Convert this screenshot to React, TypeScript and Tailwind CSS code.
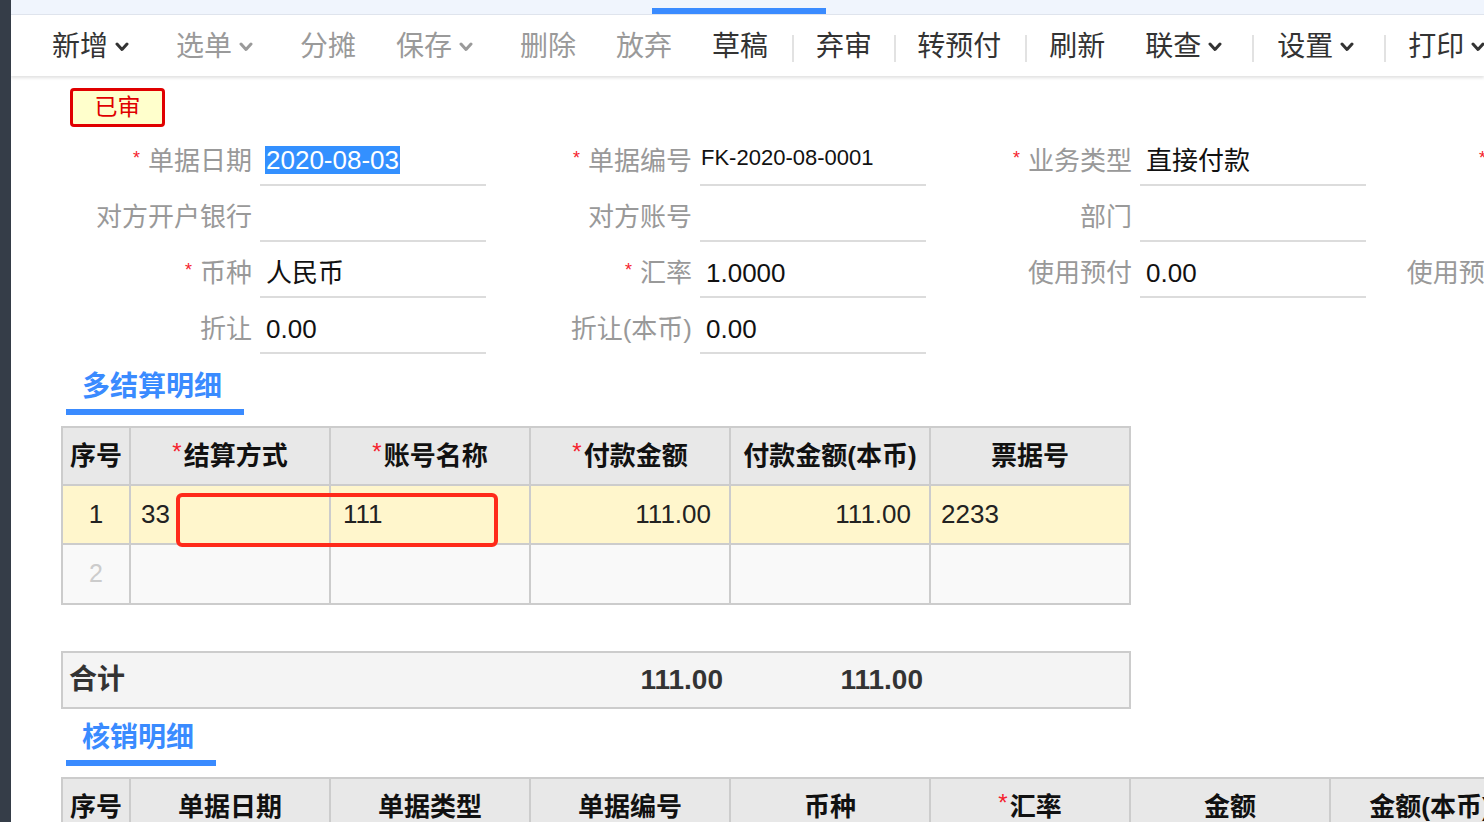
import React from "react";

const FONT = { fontFamily: '"Liberation Sans", "Noto Sans CJK SC", sans-serif' };

type ToolItem = { label: string; ml: number; gray?: boolean; caret?: boolean; sep?: boolean };

const toolItems: ToolItem[] = [
  { label: "新增", ml: 41, caret: true },
  { label: "选单", ml: 47, gray: true, caret: true },
  { label: "分摊", ml: 47, gray: true },
  { label: "保存", ml: 40, gray: true, caret: true },
  { label: "删除", ml: 47, gray: true },
  { label: "放弃", ml: 40, gray: true },
  { label: "草稿", ml: 40 },
  { label: "", ml: 24, sep: true },
  { label: "弃审", ml: 22 },
  { label: "", ml: 22, sep: true },
  { label: "转预付", ml: 21 },
  { label: "", ml: 24, sep: true },
  { label: "刷新", ml: 22 },
  { label: "联查", ml: 40, caret: true },
  { label: "", ml: 30, sep: true },
  { label: "设置", ml: 23, caret: true },
  { label: "", ml: 30, sep: true },
  { label: "打印", ml: 22, caret: true },
];

const Caret = ({ color }: { color: string }) => (
  <svg width="14" height="10" viewBox="0 0 14 10" className="ml-[7px] shrink-0">
    <polyline points="2,2 7,7.5 12,2" fill="none" stroke={color} strokeWidth="3" strokeLinecap="round" strokeLinejoin="round" />
  </svg>
);

const Star = () => <span className="text-[#f5222d] text-[18px] mr-[8px] relative -top-[3px]">*</span>;

type Field = { label: string; value?: string; req?: boolean; kind?: "date" | "small"; pr?: string };

const formRows: Field[][] = [
  [
    { label: "单据日期", value: "2020-08-03", req: true, kind: "date" },
    { label: "单据编号", value: "FK-2020-08-0001", req: true, kind: "small" },
    { label: "业务类型", value: "直接付款", req: true },
    { label: "供应商", req: true },
  ],
  [
    { label: "对方开户银行" },
    { label: "对方账号" },
    { label: "部门" },
    { label: "" },
  ],
  [
    { label: "币种", value: "人民币", req: true },
    { label: "汇率", value: "1.0000", req: true },
    { label: "使用预付", value: "0.00" },
    { label: "使用预付(本币)", pr: "pr-[0px]" },
  ],
  [{ label: "折让", value: "0.00" }, { label: "折让(本币)", value: "0.00" }],
];

const FieldCell = ({ f }: { f: Field }) => (
  <div className="flex shrink-0 w-[440px] h-[56px]">
    <div
      className={`w-[214px] shrink-0 ${f.pr ?? "pr-[8px]"} pt-[6px] flex items-center justify-end text-[26px] text-[#999] whitespace-nowrap`}
    >
      {f.req && <Star />}
      {f.label}
    </div>
    {f.label !== "" || f.value ? (
      <div className="w-[226px] shrink-0 border-b-2 border-[#dcdcdc] pt-[6px] flex items-center">
        {f.kind === "date" ? (
          <span className="ml-[5px] bg-[#3390ff] text-white text-[26px] leading-[28px] px-[1px]">{f.value}</span>
        ) : f.kind === "small" ? (
          <span className="ml-[1px] -mt-[6px] text-[22px] text-[#111]">{f.value}</span>
        ) : (
          <span className="ml-[6px] mt-[2px] text-[26px] text-[#111]">{f.value}</span>
        )}
      </div>
    ) : null}
  </div>
);

const HeadCell = ({ w, text, req }: { w: string; text: string; req?: boolean }) => (
  <div className={`${w} shrink-0 border-r-2 border-b-2 border-[#ccc] flex items-center justify-center font-bold text-[26px] text-[#111]`}>
    {req && <span className="text-[#f5222d] text-[24px] font-normal mr-[2px] relative -top-[4px]">*</span>}
    {text}
  </div>
);

const SectionTitle = ({ text, w, mt }: { text: string; w: string; mt: string }) => (
  <div className={`${mt} ml-[55px] ${w} pl-[16px] pb-[4px] border-b-[6px] border-[#3a8bff] text-[28px] leading-[36px] font-bold text-[#3a8bff]`}>
    {text}
  </div>
);

const cell = "shrink-0 border-r-2 border-b-2 border-[#ccc] flex items-center";

export default function App() {
  return (
    <div className="flex h-screen w-full overflow-hidden bg-white" style={FONT}>
      <div className="w-[11px] shrink-0 bg-[#353d48]" />
      <div className="flex-1 min-w-0 overflow-hidden">
        <div className="h-[15px] bg-[#f0f5fd] border-b border-[#e0e5ee] relative">
          <div className="absolute left-[641px] top-[8px] w-[174px] h-[6px] bg-[#3a8bff]" />
        </div>
        <div className="h-[61px] pt-[3px] flex items-center shadow-[0_2px_3px_rgba(0,0,0,0.12)] whitespace-nowrap relative">
          {toolItems.map((t, i) =>
            t.sep ? (
              <div key={i} className="w-[2px] h-[27px] bg-[#e2e2e2] shrink-0 mt-[2px]" style={{ marginLeft: t.ml }} />
            ) : (
              <div
                key={i}
                className={`flex items-center shrink-0 text-[28px] leading-[36px] ${t.gray ? "text-[#9a9a9a]" : "text-[#333]"}`}
                style={{ marginLeft: t.ml }}
              >
                {t.label}
                {t.caret && <Caret color={t.gray ? "#9a9a9a" : "#333"} />}
              </div>
            )
          )}
        </div>

        <div className="mt-[12px] ml-[59px] w-[95px] h-[39px] border-[3px] border-[#e00000] rounded-[4px] bg-[#ffffcc] flex items-center justify-center text-[23px] text-[#e00000]">
          已审
        </div>

        <div className="mt-[3px] ml-[35px]">
          {formRows.map((row, r) => (
            <div key={r} className="flex">
              {row.map((f, c) => (
                <FieldCell key={c} f={f} />
              ))}
            </div>
          ))}
        </div>

        <SectionTitle text="多结算明细" w="w-[178px]" mt="mt-[15px]" />

        <div className="relative mt-[11px] ml-[50px] w-[1070px] border-l-2 border-t-2 border-[#ccc]">
          <div className="flex h-[58px] bg-[#e8e8e8]">
            <HeadCell w="w-[68px]" text="序号" />
            <HeadCell w="w-[200px]" text="结算方式" req />
            <HeadCell w="w-[200px]" text="账号名称" req />
            <HeadCell w="w-[200px]" text="付款金额" req />
            <HeadCell w="w-[200px]" text="付款金额(本币)" />
            <HeadCell w="w-[200px]" text="票据号" />
          </div>
          <div className="flex h-[59px] bg-[#fff6cc] text-[26px] text-[#222]">
            <div className={`w-[68px] ${cell} justify-center`}>1</div>
            <div className={`w-[200px] ${cell} pl-[10px]`}>33</div>
            <div className={`w-[200px] ${cell} pl-[12px]`}>111</div>
            <div className={`w-[200px] ${cell} justify-end pr-[18px]`}>111.00</div>
            <div className={`w-[200px] ${cell} justify-end pr-[18px]`}>111.00</div>
            <div className={`w-[200px] ${cell} pl-[10px]`}>2233</div>
          </div>
          <div className="flex h-[60px] bg-[#f9f9f9] text-[25px]">
            <div className={`w-[68px] ${cell} justify-center text-[#ccc]`}>2</div>
            <div className={`w-[200px] ${cell}`} />
            <div className={`w-[200px] ${cell}`} />
            <div className={`w-[200px] ${cell}`} />
            <div className={`w-[200px] ${cell}`} />
            <div className={`w-[200px] ${cell}`} />
          </div>
          <div className="absolute left-[113px] top-[65px] w-[322px] h-[54px] border-[4px] border-[#ff2a1a] rounded-[6px]" />
        </div>

        <div className="mt-[46px] ml-[50px] w-[1070px] h-[58px] border-2 border-[#ccc] bg-[#f4f4f4] flex items-center font-bold text-[28px] text-[#333]">
          <div className="w-[466px] shrink-0 pl-[6px]">合计</div>
          <div className="w-[200px] shrink-0 text-right pr-[6px]">111.00</div>
          <div className="w-[200px] shrink-0 text-right pr-[6px]">111.00</div>
        </div>

        <SectionTitle text="核销明细" w="w-[150px]" mt="mt-[11px]" />

        <div className="mt-[11px] ml-[50px] w-[2000px] border-l-2 border-t-2 border-[#ccc]">
          <div className="flex h-[58px] bg-[#e8e8e8]">
            <HeadCell w="w-[68px]" text="序号" />
            <HeadCell w="w-[200px]" text="单据日期" />
            <HeadCell w="w-[200px]" text="单据类型" />
            <HeadCell w="w-[200px]" text="单据编号" />
            <HeadCell w="w-[200px]" text="币种" />
            <HeadCell w="w-[200px]" text="汇率" req />
            <HeadCell w="w-[200px]" text="金额" />
            <HeadCell w="w-[200px]" text="金额(本币)" />
            <HeadCell w="w-[200px]" text="本次核销" />
          </div>
        </div>
      </div>
    </div>
  );
}
